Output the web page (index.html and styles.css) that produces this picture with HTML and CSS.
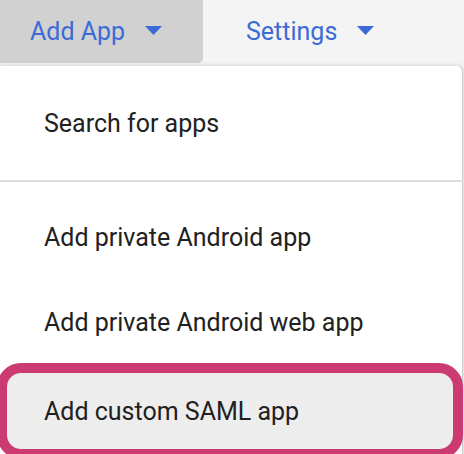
FILE: index.html
```html
<!DOCTYPE html>
<html>
<head>
<meta charset="utf-8">
<link rel="stylesheet" href="styles.css">
</head>
<body>
<div class="page">
  <nav class="topbar">
    <div class="tab tab-active">
      <span>Add App</span>
      <svg class="caret" width="17" height="9" viewBox="0 0 17 9"><path d="M0 0H17L8.5 9Z" fill="#3b6bd6"/></svg>
    </div>
    <div class="tab tab-settings">
      <span>Settings</span>
      <svg class="caret" width="17" height="9" viewBox="0 0 17 9"><path d="M0 0H17L8.5 9Z" fill="#3b6bd6"/></svg>
    </div>
  </nav>
  <div class="menu">
    <div class="item item-first">Search for apps</div>
    <div class="divider"></div>
    <div class="group">
      <div class="item">Add private Android app</div>
      <div class="item">Add private Android web app</div>
      <div class="item item-hl">Add custom SAML app</div>
    </div>
  </div>
</div>
</body>
</html>
```

FILE: styles.css
```css
html, body {
  margin: 0;
  padding: 0;
  height: 100%;
  overflow: hidden;
  background: #f4f4f4;
}
body {
  font-family: Roboto, "Noto Sans", sans-serif;
}
.page {
  width: 464px;
  height: 454px;
  overflow: hidden;
  display: flex;
  flex-direction: column;
}
.topbar {
  display: flex;
  height: 66px;
  flex: none;
  background: #f4f4f4;
}
.tab {
  height: 63px;
  display: flex;
  align-items: center;
  gap: 20px;
  font-size: 25px;
  color: #3b6bd6;
  box-sizing: border-box;
}
.tab-active {
  width: 203px;
  padding-left: 30px;
  background: #d1d1d1;
  border-bottom-right-radius: 5px;
}
.tab-settings {
  padding-left: 43px;
}
.caret {
  display: block;
  margin-top: -3px;
}
.menu {
  width: 462px;
  flex: 1;
  background: #fff;
  border-top-right-radius: 5px;
  box-shadow: 0 -1px 4px rgba(0,0,0,0.12), 1px 0 0 #d6d6d6, 2px 0 0 #ececec;
  display: flex;
  flex-direction: column;
}
.item {
  height: 85px;
  flex: none;
  display: flex;
  align-items: center;
  padding-left: 44px;
  font-size: 25px;
  color: #212121;
  box-sizing: border-box;
}
.item-first {
  height: 114px;
}
.divider {
  height: 2px;
  flex: none;
  background: #dedede;
  width: 464px;
}
.group {
  padding-top: 13px;
  display: flex;
  flex-direction: column;
}
.item-hl {
  margin-top: -2px;
  margin-left: -3px;
  width: 466px;
  height: 96px;
  border: 10px solid #cc3a72;
  border-radius: 24px;
  background: #ededed;
  padding-left: 37px;
}
```
